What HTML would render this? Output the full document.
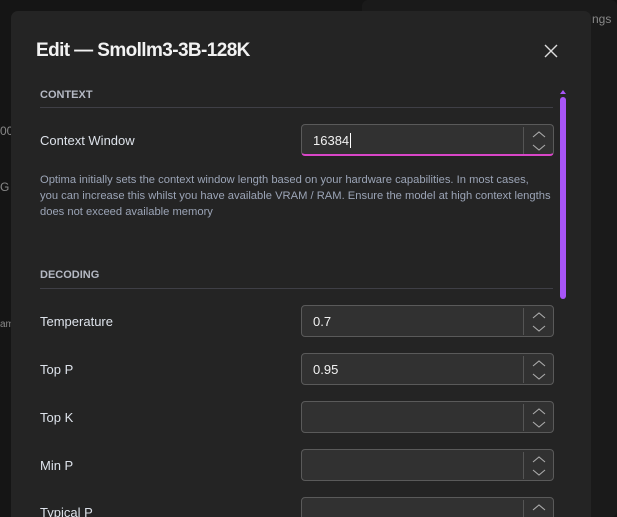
<!DOCTYPE html>
<html><head><meta charset="utf-8"><style>
*{box-sizing:border-box;margin:0;padding:0}
html,body{width:617px;height:517px;overflow:hidden}
body{background:#141414;font-family:"Liberation Sans",sans-serif;position:relative;color:#e8e8e8}
.bg1{position:absolute;left:0;top:0;width:350px;height:517px;background:#151515}
.bg2{position:absolute;left:362px;top:0;width:255px;height:517px;background:#1a1a1a;border-radius:6px}
.bgt{position:absolute;font-size:12px;color:#888}
.modal{position:absolute;left:11px;top:11px;width:580px;height:506px;background:#242424;border-radius:7px 7px 0 0;overflow:hidden}
.title{position:absolute;left:25px;top:29px;font-size:19px;font-weight:bold;color:#f2f2f2;letter-spacing:-0.6px}
.close{position:absolute;left:533px;top:33px}
.sec{position:absolute;left:29px;font-size:11px;font-weight:bold;color:#b5b9c4}
.line{position:absolute;left:29px;width:513px;height:1px;background:#3f3f46}
.lbl{position:absolute;left:29px;font-size:13px;color:#dde2ea}
.inp{position:absolute;left:290px;width:253px;height:32px;background:#313131;border:1px solid #5a5a5a;border-radius:4px}
.inp .v{position:absolute;left:11px;top:8px;font-size:13px;color:#f2f2f2}
.inp .div{position:absolute;left:221px;top:2px;width:1px;height:27px;background:#555}
.inp svg{position:absolute;left:225px;top:3px}
.desc{position:absolute;left:29px;top:161px;width:530px;font-size:11.2px;line-height:16px;color:#9ba4b6;white-space:nowrap}
.sb{position:absolute;left:549px;top:86px;width:6px;height:202px;background:#a855f7;border-radius:3px}
</style></head><body>
<div class="bg1"></div><div class="bg2"></div>
<div class="bgt" style="left:592px;top:12px">ngs</div>
<div class="bgt" style="left:0;top:124px">00</div>
<div class="bgt" style="left:0;top:180px">G</div>
<div class="bgt" style="left:0;top:319px;font-size:10px">am</div>
<div class="modal">
<div class="title">Edit — Smollm3-3B-128K</div>
<svg class="close" width="14" height="14" viewBox="0 0 14 14"><path d="M1 1L13 13M13 1L1 13" stroke="#ddd" stroke-width="1.4"/></svg>
<div class="sec" style="top:78px">CONTEXT</div>
<div class="line" style="top:96px"></div>
<div class="lbl" style="top:122px">Context Window</div>
<div class="inp" style="top:113px;border-bottom:2px solid #d946c8"><div class="v">16384<span style="border-left:1px solid #fff;margin-left:1px"></span></div><div class="div"></div>
<svg width="24" height="26" viewBox="0 0 24 26"><path d="M6 9L12 4L18 9M6 17L12 22L18 17" fill="none" stroke="#aaa" stroke-width="1.1"/></svg></div>
<div class="desc">Optima initially sets the context window length based on your hardware capabilities. In most cases,<br>you can increase this whilst you have available VRAM / RAM. Ensure the model at high context lengths<br>does not exceed available memory</div>
<div class="sec" style="top:258px">DECODING</div>
<div class="line" style="top:277px"></div>
<div class="lbl" style="top:303px">Temperature</div>
<div class="inp" style="top:294px"><div class="v">0.7</div><div class="div"></div><svg width="24" height="26" viewBox="0 0 24 26"><path d="M6 9L12 4L18 9M6 17L12 22L18 17" fill="none" stroke="#aaa" stroke-width="1.1"/></svg></div>
<div class="lbl" style="top:351px">Top P</div>
<div class="inp" style="top:342px"><div class="v">0.95</div><div class="div"></div><svg width="24" height="26" viewBox="0 0 24 26"><path d="M6 9L12 4L18 9M6 17L12 22L18 17" fill="none" stroke="#aaa" stroke-width="1.1"/></svg></div>
<div class="lbl" style="top:399px">Top K</div>
<div class="inp" style="top:390px"><div class="div"></div><svg width="24" height="26" viewBox="0 0 24 26"><path d="M6 9L12 4L18 9M6 17L12 22L18 17" fill="none" stroke="#aaa" stroke-width="1.1"/></svg></div>
<div class="lbl" style="top:447px">Min P</div>
<div class="inp" style="top:438px"><div class="div"></div><svg width="24" height="26" viewBox="0 0 24 26"><path d="M6 9L12 4L18 9M6 17L12 22L18 17" fill="none" stroke="#aaa" stroke-width="1.1"/></svg></div>
<div class="lbl" style="top:494px">Typical P</div>
<div class="inp" style="top:486px"><div class="div"></div><svg width="24" height="26" viewBox="0 0 24 26"><path d="M6 9L12 4L18 9M6 17L12 22L18 17" fill="none" stroke="#aaa" stroke-width="1.1"/></svg></div>
<svg style="position:absolute;left:549px;top:78px" width="6" height="5"><path d="M0 5L3 1L6 5Z" fill="#a855f7"/></svg>
<div class="sb"></div>
</div>
</body></html>
